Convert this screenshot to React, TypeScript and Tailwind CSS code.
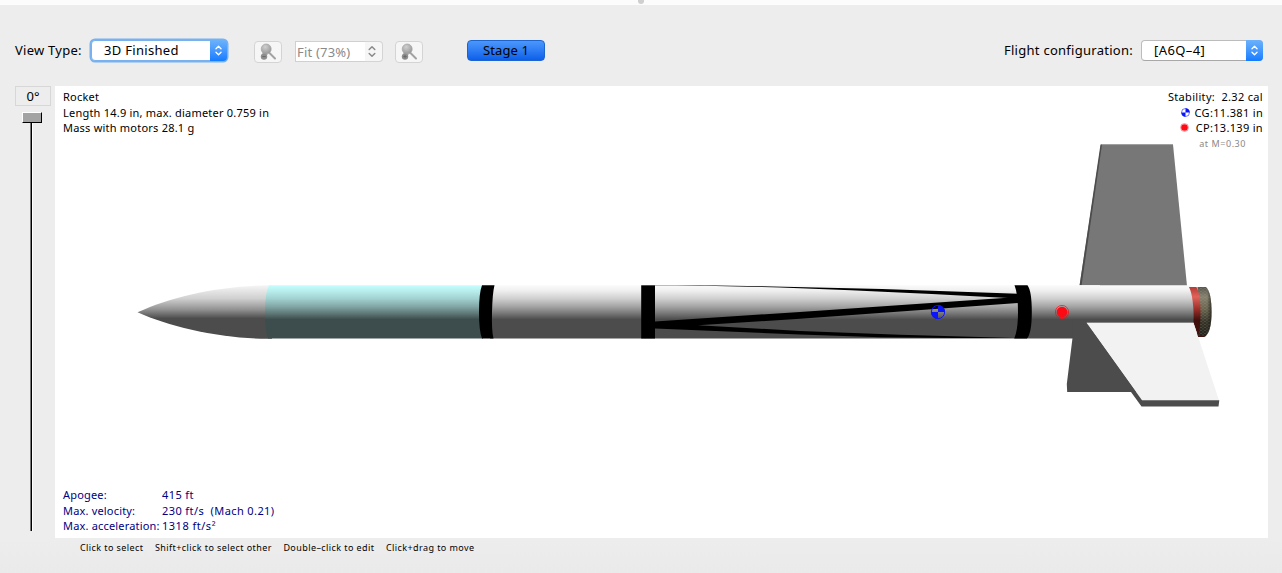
import React from 'react';

function Chevrons({ className }: { className: string }) {
  return (
    <svg className={className} viewBox="0 0 10 14" fill="none" strokeWidth="1.5" strokeLinecap="round" strokeLinejoin="round" stroke="currentColor">
      <path d="M2.200 5 5 2.300 7.800 5M2.200 9 5 11.700 7.800 9" />
    </svg>
  );
}

function ZoomButton({ plus = false }: { plus?: boolean }) {
  return (
    <button className="h-[22px] w-[28px] rounded-[4px] border border-[#d4d4d4] bg-[#f6f6f6] flex items-center justify-center">
      <svg className="h-[18px] w-[18px]" viewBox="0 0 18 18">
        <defs>
          <radialGradient id="lens" cx="0.4" cy="0.3" r="0.7">
            <stop offset="0" stopColor="#d0d0d0" />
            <stop offset="1" stopColor="#989898" />
          </radialGradient>
        </defs>
        <path d="M10 9.500 16 15.500" stroke="#a2a2a2" strokeWidth="2" strokeLinecap="round" />
        <path d="M4 8 9 11 6 14 3 12Z" fill="#ababab" />
        <circle cx="7.200" cy="6" r="5" fill="url(#lens)" stroke="#a5a5a5" strokeWidth="0.700" />
        <circle cx="5" cy="13.600" r="3.200" fill="#8e8e8e" />
        <path d={plus ? 'M3.300 13.600h3.400M5 11.900v3.400' : 'M3.300 13.600h3.400'} stroke="#696969" strokeWidth="1" />
      </svg>
    </button>
  );
}

function CgMark({ cx, cy, r }: { cx: number; cy: number; r: number }) {
  return (
    <g transform={`translate(${cx} ${cy}) scale(${r})`}>
      <path d="M0 0V-1A1 1 0 0 1 1 0ZM0 0V1A1 1 0 0 1 -1 0Z" fill="#0a14ff" />
      <circle r="0.950" fill="none" stroke="#0a14ff" strokeWidth="0.140" />
    </g>
  );
}

function Rocket() {
  return (
    <svg className="absolute inset-0 h-full w-full" viewBox="55 86 1213 452">
      <defs>
        <linearGradient id="body" gradientUnits="userSpaceOnUse" x1="0" y1="285" x2="0" y2="339">
          <stop offset="0" stopColor="#fbfbfb" />
          <stop offset="0.100" stopColor="#f0f0f0" />
          <stop offset="0.250" stopColor="#d0d0d0" />
          <stop offset="0.400" stopColor="#a4a4a4" />
          <stop offset="0.530" stopColor="#757575" />
          <stop offset="0.640" stopColor="#4c4c4c" />
          <stop offset="1" stopColor="#4c4c4c" />
        </linearGradient>
        <linearGradient id="nose" gradientUnits="userSpaceOnUse" x1="0" y1="285" x2="0" y2="339">
          <stop offset="0" stopColor="#f6f6f6" />
          <stop offset="0.250" stopColor="#d0d0d0" />
          <stop offset="0.450" stopColor="#939393" />
          <stop offset="0.620" stopColor="#4c4c4c" />
          <stop offset="1" stopColor="#4c4c4c" />
        </linearGradient>
        <linearGradient id="tube" gradientUnits="userSpaceOnUse" x1="0" y1="285" x2="0" y2="339">
          <stop offset="0" stopColor="#c6fffe" />
          <stop offset="0.100" stopColor="#b9f0ef" />
          <stop offset="0.250" stopColor="#a2d2d1" />
          <stop offset="0.400" stopColor="#81a6a5" />
          <stop offset="0.530" stopColor="#5d7776" />
          <stop offset="0.640" stopColor="#3d4c4c" />
          <stop offset="1" stopColor="#3d4c4c" />
        </linearGradient>
        <linearGradient id="red" x1="0" y1="0" x2="0" y2="1">
          <stop offset="0" stopColor="#b63b35" />
          <stop offset="0.200" stopColor="#e0635b" />
          <stop offset="0.450" stopColor="#9c2f29" />
          <stop offset="0.680" stopColor="#3f0f0c" />
          <stop offset="1" stopColor="#42110e" />
        </linearGradient>
        <linearGradient id="motor" x1="0" y1="0" x2="0" y2="1">
          <stop offset="0" stopColor="#57554e" />
          <stop offset="0.200" stopColor="#86816f" />
          <stop offset="0.450" stopColor="#67634f" />
          <stop offset="0.700" stopColor="#353329" />
          <stop offset="1" stopColor="#22211b" />
        </linearGradient>
        <linearGradient id="rim" x1="0" y1="0" x2="1" y2="0">
          <stop offset="0.700" stopColor="#1d1c18" stopOpacity="0" />
          <stop offset="1" stopColor="#1d1c18" stopOpacity="0.700" />
        </linearGradient>
        <pattern id="weave" width="4" height="3" patternUnits="userSpaceOnUse">
          <path d="M0 .5h2M2 2h2" stroke="#b4ae98" strokeOpacity="0.250" strokeWidth="0.800" />
        </pattern>
      </defs>

      <path d="M1101 144.500H1173L1187 286H1079.500Z" fill="#777" />
      <path d="M1100.500 144.500h1.500L1081.500 286H1079.500Z" fill="#4c4c4c" />
      <path d="M1101 144.700H1173" stroke="#8c8c8c" strokeWidth="0.700" />

      <path d="M137.500 312.300C172 296 220 286 267 285.300H272V338.800H267C220 338.500 170 327 137.500 312.300Z" fill="url(#nose)" />
      <path d="M269 285.300H483V338.500H268Q265 331 265 312T269 285.300Z" fill="url(#tube)" />
      <path d="M490 285.300H1100V338.500H490Z" fill="url(#body)" />
      <path d="M1072.500 338 1066.800 384 1067.200 392H1145L1110 322H1072Z" fill="#4c4c4c" />
      <path d="M1075 285.300H1191Q1194 292 1194 323H1075Z" fill="url(#body)" />

      <path d="M482 285.300H494.500Q492.500 293 492 312T493.500 338.500H482Q479 331 479 312T482 285.300Z" fill="#000" />
      <path d="M641.200 285.300H655V338.500H641.200Z" fill="#000" />
      <path d="M655 285.300H700Q860 287 1019 293.700V298.600Q900 292 800 288.300T655 285.600Z" fill="#000" />
      <path d="M655 321.500 800 312 1018 297V303L800 318.800 698 325.200 800 330.900 900 334.800 1015 338H955L880 337.200 800 334.500 655 328.400Z" fill="#000" />
      <path d="M1014.500 285.300H1027.500Q1031.800 291 1031.800 312T1027 338.500H1014.200Q1018 330 1018 312T1014.500 285.300Z" fill="#000" />

      <path d="M1197.500 287H1206Q1211.500 292 1211.500 312T1205 336.800H1197Z" fill="url(#motor)" />
      <path d="M1197.500 287H1206Q1211.500 292 1211.500 312T1205 336.800H1197Z" fill="url(#weave)" />
      <path d="M1197.500 287H1206Q1211.500 292 1211.500 312T1205 336.800H1197Z" fill="url(#rim)" />
      <path d="M1189 287H1196.500Q1200.500 294 1200.500 312T1198 336L1193.500 323Q1194 297 1189 287Z" fill="url(#red)" />

      <path d="M1086.500 322.700H1193.500L1219 400.500H1142Z" fill="#f2f2f2" />
      <path d="M1086.500 323 1142 400.300H1219.300L1218.500 406.500H1141.500L1131 392Z" fill="#4c4c4c" />
      <path d="M1087 322.500H1193.500" stroke="#8b8b8b" strokeWidth="0.700" />
      <path d="M1193.500 323 1198 336H1205L1204 337H1198.300Z" fill="#42110e" />

      <CgMark cx={938} cy={312} r={7} />
      <circle cx="1062" cy="312" r="5.300" fill="#ff0a14" />
      <circle cx="1062" cy="312" r="6.600" fill="none" stroke="#ff0a14" strokeWidth="0.700" />
    </svg>
  );
}

const Combo = ({ label, focus = false, width }: { label: string; focus?: boolean; width: string }) => (
  <div className={`${width} flex h-[21px] rounded-[4px] bg-white text-[13px] leading-[20px] ${focus ? 'border border-[#78b1ee] tracking-[0.300px] shadow-[0_0_0_1.5px_#78b1ee]' : 'border border-[#bcbcbc] border-b-[#a8a8a8] tracking-[0.400px]'}`}>
    <span className="-mt-px flex-1 whitespace-nowrap pl-[12px]">{label}</span>
    <span className="-my-px -mr-px flex w-[17px] items-center justify-center rounded-r-[4px] bg-linear-to-b from-[#6bb2fb] to-[#117bff] text-white">
      <Chevrons className="h-[13px] w-[9px]" />
    </span>
  </div>
);

export default function App() {
  return (
    <div className="flex h-[573px] w-[1282px] flex-col overflow-hidden bg-[#ededed] font-['Noto_Sans',sans-serif] text-black">
      <div className="flex h-[5px] shrink-0 justify-center bg-[#fcfcfc]">
        <span className="h-[4px] w-[6px] rounded-b-full bg-[#cfcfcf]" />
      </div>
      <header className="flex h-[81px] shrink-0 items-start pl-[15px] pr-[19px] pt-[35px] text-[13px] leading-[20px]">
        <span className="w-[76px] whitespace-nowrap tracking-[0.250px]">View Type:</span>
        <Combo label="3D Finished" focus width="w-[136px]" />
        <div className="ml-[27px] mt-px flex">
          <ZoomButton />
          <div className="ml-[13px] flex h-[21px] w-[88px] text-[#8a8a8a]">
            <span className="w-[70px] whitespace-nowrap border border-r-0 border-[#d0d0d0] bg-white pl-px tracking-[0.200px]">Fit (73%)</span>
            <span className="flex w-[18px] items-center justify-center rounded-r-[4px] border border-l-0 border-[#d4d4d4] bg-[#f6f6f6] pr-[4px]">
              <Chevrons className="h-[15px] w-[10px]" />
            </span>
          </div>
          <span className="w-[12px]" />
          <ZoomButton plus />
        </div>
        <button className="ml-[44px] h-[21px] w-[78px] rounded-[4px] border border-[#1c64cf] bg-linear-to-b from-[#4b97fc] to-[#0a60ea] leading-[19px] tracking-[0.100px]">Stage 1</button>
        <span className="ml-auto mr-[8px] tracking-[0.270px]">Flight configuration:</span>
        <Combo label="[A6Q–4]" width="w-[122px]" />
      </header>
      <main className="flex h-[452px] shrink-0 pl-[15px]">
        <aside className="flex w-[40px] flex-col">
          <div className="h-[20px] w-[36px] border border-[#d7d7d7] text-center text-[13px] leading-[19px]">0°</div>
          <div className="ml-[7px] mt-[6px] h-[11px] w-[20px] border border-b-black border-l-white border-r-black border-t-white bg-[#a3a3a3]" />
          <div className="ml-[15px] h-[408px] w-[3px] border-x border-l-[#777] border-r-white bg-black" />
        </aside>
        <section className="relative flex h-[452px] w-[1213px] justify-between bg-white px-[8px] text-[11px] leading-[15.500px]">
          <Rocket />
          <div className="relative flex flex-col justify-between whitespace-nowrap pb-[4px] pt-[3px]">
            <div className="tracking-[0.220px]">
              <p>Rocket</p>
              <p>Length 14.9 in, max. diameter 0.759 in</p>
              <p>Mass with motors 28.1 g</p>
            </div>
            <div className="grid grid-cols-[99px_auto] grid-rows-[16px_15px_16px] leading-[16px] tracking-[0.180px] text-[#000080]">
              <span>Apogee:</span><span className="tracking-[0.400px]">415 ft</span>
              <span>Max. velocity:</span><span className="tracking-[0.400px]">230 ft/s&nbsp; (Mach 0.21)</span>
              <span>Max. acceleration:</span><span className="tracking-[0.500px]">1318 ft/s²</span>
            </div>
          </div>
          <div className="relative -mr-[3px] flex w-[110px] flex-col items-end whitespace-nowrap pt-[3px] tracking-[0.320px]">
            <p>Stability:&nbsp; 2.32 cal</p>
            <p className="flex items-center gap-[5px]"><svg className="h-[9px] w-[9px]" viewBox="0 0 9 9"><CgMark cx={4.5} cy={4.5} r={4.2} /></svg>CG:11.381 in</p>
            <p className="flex items-center gap-[7px]"><svg className="h-[9px] w-[9px]" viewBox="0 0 9 9"><circle cx="4.500" cy="4.500" r="3.300" fill="#ff0a14" /><circle cx="4.500" cy="4.500" r="4" fill="none" stroke="#ff0a14" strokeWidth="0.400" /></svg>CP:13.139 in</p>
            <p className="mr-[17px] text-[9px] tracking-[0.550px] text-[#888]">at M=0.30</p>
          </div>
        </section>
      </main>
      <footer className="flex flex-1 gap-[11.500px] bg-linear-to-b from-[#ededed] to-[#eaeaea] pl-[80px] pt-[3px] text-[9px] leading-[14px] tracking-[0.420px]">
        <span>Click to select</span>
        <span>Shift+click to select other</span>
        <span>Double–click to edit</span>
        <span>Click+drag to move</span>
      </footer>
    </div>
  );
}
